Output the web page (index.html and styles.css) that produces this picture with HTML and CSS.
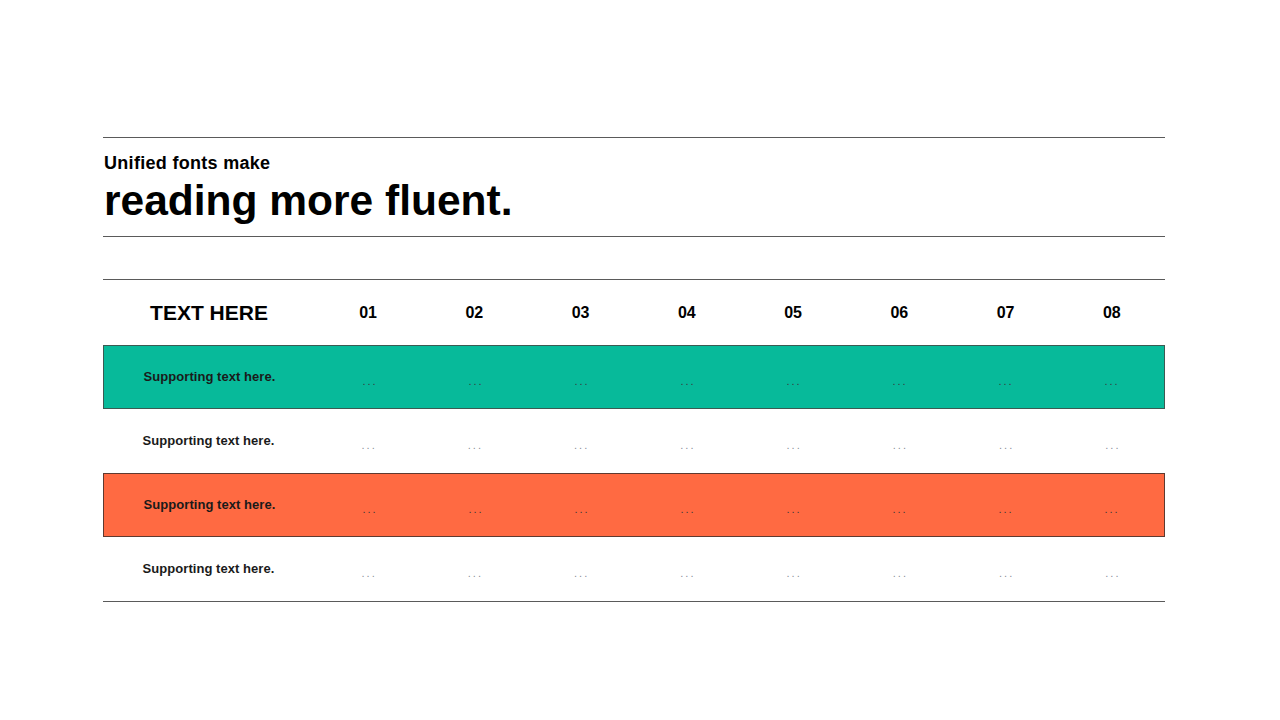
FILE: index.html
```html
<!DOCTYPE html>
<html>
<head>
<meta charset="utf-8">
<link rel="stylesheet" href="styles.css">
</head>
<body>
<main class="page">
  <header class="title-block">
    <div class="kicker">Unified fonts make</div>
    <h1 class="headline">reading more fluent.</h1>
  </header>
  <section class="table">
    <div class="row head">
      <div class="cell first">TEXT HERE</div>
      <div class="cell">01</div><div class="cell">02</div><div class="cell">03</div><div class="cell">04</div>
      <div class="cell">05</div><div class="cell">06</div><div class="cell">07</div><div class="cell">08</div>
    </div>
    <div class="row body teal">
      <div class="cell first">Supporting text here.</div>
      <div class="cell dots">...</div><div class="cell dots">...</div><div class="cell dots">...</div><div class="cell dots">...</div>
      <div class="cell dots">...</div><div class="cell dots">...</div><div class="cell dots">...</div><div class="cell dots">...</div>
    </div>
    <div class="row body">
      <div class="cell first">Supporting text here.</div>
      <div class="cell dots">...</div><div class="cell dots">...</div><div class="cell dots">...</div><div class="cell dots">...</div>
      <div class="cell dots">...</div><div class="cell dots">...</div><div class="cell dots">...</div><div class="cell dots">...</div>
    </div>
    <div class="row body orange">
      <div class="cell first">Supporting text here.</div>
      <div class="cell dots">...</div><div class="cell dots">...</div><div class="cell dots">...</div><div class="cell dots">...</div>
      <div class="cell dots">...</div><div class="cell dots">...</div><div class="cell dots">...</div><div class="cell dots">...</div>
    </div>
    <div class="row body">
      <div class="cell first">Supporting text here.</div>
      <div class="cell dots">...</div><div class="cell dots">...</div><div class="cell dots">...</div><div class="cell dots">...</div>
      <div class="cell dots">...</div><div class="cell dots">...</div><div class="cell dots">...</div><div class="cell dots">...</div>
    </div>
  </section>
</main>
</body>
</html>
```
FILE: styles.css
```css
html, body {
  margin: 0;
  padding: 0;
  background: #ffffff;
}
body {
  font-family: "Liberation Sans", Arial, sans-serif;
  color: #000;
}
.page {
  width: 1062px;
  margin-left: 103px;
  padding-top: 137px;
}
.title-block {
  border-top: 1px solid #5a5a5a;
  border-bottom: 1px solid #5a5a5a;
  padding: 14px 0 10px 1px;
}
.kicker {
  font-size: 18px;
  font-weight: bold;
  line-height: 22px;
  letter-spacing: 0.3px;
}
.headline {
  margin: 2px 0 0;
  font-size: 42.5px;
  font-weight: bold;
  line-height: 50px;
  letter-spacing: 0;
}
.table {
  margin-top: 42px;
  border-top: 1px solid #5a5a5a;
  border-bottom: 1px solid #5a5a5a;
}
.row {
  display: grid;
  grid-template-columns: 212px repeat(8, 1fr);
  align-items: center;
  box-sizing: border-box;
}
.row.head {
  height: 65px;
}
.row.body {
  height: 64px;
}
.cell {
  text-align: center;
}
.head .cell {
  font-size: 16px;
  font-weight: bold;
}
.head .cell.first {
  font-size: 21px;
}
.body .cell.first {
  font-size: 13px;
  font-weight: bold;
  color: #1a1a1a;
  margin-top: -2px;
  margin-left: -1px;
  letter-spacing: 0.05px;
}
.dots {
  font-size: 11px;
  letter-spacing: 2px;
  text-indent: 2px;
  color: #8a8f99;
  margin-top: 7px;
}
.teal {
  background: #07ba9a;
  border: 1px solid #3c5a52;
}
.orange {
  background: #ff6a42;
  border: 1px solid #5e3a30;
}
.teal .dots, .orange .dots {
  color: #3a3a3a;
}
```
